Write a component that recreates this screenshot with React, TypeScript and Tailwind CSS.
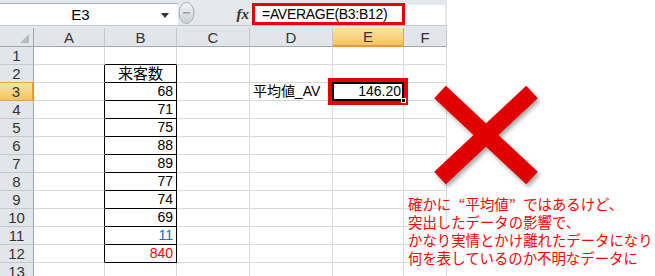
import React from "react";

const COLS = ["A", "B", "C", "D", "E", "F"];
const BVALS: Record<number, { t: string; c: string }> = {
  3: { t: "68", c: "text-black" },
  4: { t: "71", c: "text-black" },
  5: { t: "75", c: "text-black" },
  6: { t: "88", c: "text-black" },
  7: { t: "89", c: "text-black" },
  8: { t: "77", c: "text-black" },
  9: { t: "74", c: "text-black" },
  10: { t: "69", c: "text-black" },
  11: { t: "11", c: "text-[#0070c0]" },
  12: { t: "840", c: "text-[#ff0000]" },
};

function Cell({ r, c }: { r: number; c: string }) {
  const isBox = c === "B" && r >= 2 && r <= 12;
  const blackRight = isBox || (c === "A" && r >= 2 && r <= 12);
  const blackBottom = isBox || (c === "B" && r === 1);
  const rightCls = blackRight ? "border-r-black" : "border-r-[#d9d9d9]";
  const bottomCls = blackBottom ? "border-b-black" : "border-b-[#d9d9d9]";
  let content: React.ReactNode = null;
  if (c === "B" && r === 2) {
    content = <div className="w-full text-center text-[15px] leading-[17px] text-black">来客数</div>;
  } else if (c === "B" && BVALS[r]) {
    content = (
      <div className={`w-full text-right pr-[3px] text-[14px] leading-[17px] ${BVALS[r].c}`}>{BVALS[r].t}</div>
    );
  } else if (c === "D" && r === 3) {
    content = <div className="pl-[3px] text-[14px] leading-[17px] text-black whitespace-nowrap">平均値_AV</div>;
  } else if (c === "E" && r === 3) {
    content = (
      <div className="absolute left-[-5px] top-[-5px] w-[80px] h-[27px] border-[4px] border-[#e60000] z-10">
        <div className="w-full h-full border-[2px] border-black bg-white flex items-center justify-end pr-[1px]">
          <span className="text-[14px] leading-[15px] text-black">146.20</span>
        </div>
        <div className="absolute right-[-2px] bottom-[-2px] w-[5px] h-[5px] bg-black border border-white" />
      </div>
    );
  }
  return (
    <div className={`relative border-r border-b ${rightCls} ${bottomCls} flex items-end overflow-visible`}>
      {content}
    </div>
  );
}

export default function App() {
  const rows = Array.from({ length: 13 }, (_, i) => i + 1);
  return (
    <div className="relative w-[655px] h-[276px] bg-white overflow-hidden font-['Liberation_Sans','Noto_Sans_CJK_JP',sans-serif]">
      <div className="w-[447px]">
        {/* formula bar */}
        <div className="flex flex-col h-[28px] bg-[#e4e7eb]">
          <div className="flex h-[25px]">
            <div className="mt-[3px] w-[178px] h-[22px] border-t border-t-[#aab1ba] pt-[1px] bg-white flex items-center">
              <div className="w-[161px] text-center text-[15px] leading-[18px] text-black">E3</div>
              <svg width="8" height="6" viewBox="0 0 8 6" className="mt-[1px]">
                <path d="M0 0 L8 0 L4 5 Z" fill="#333" />
              </svg>
            </div>
            <div className="w-[15px] h-[25px] relative">
              <svg width="17" height="25" viewBox="0 0 17 25" className="absolute left-0 top-0">
                <defs>
                  <linearGradient id="gb" x1="0" y1="0" x2="0" y2="1">
                    <stop offset="0" stopColor="#f4f5f7" />
                    <stop offset="1" stopColor="#c9ced5" />
                  </linearGradient>
                </defs>
                <ellipse cx="8.5" cy="13" rx="7.5" ry="10.5" fill="url(#gb)" stroke="#a9b0b9" />
                <rect x="5" y="12" width="7" height="1.6" fill="#9aa1aa" />
              </svg>
            </div>
            <div className="w-[59px] flex items-center justify-end pr-[3px]">
              <span className="font-['Liberation_Serif',serif] italic font-bold text-[15px] leading-[18px] text-[#333] mt-[3px]">fx</span>
            </div>
            <div className="mt-[3px] w-[153px] h-[22px] border-[3px] border-[#e60000] bg-white flex items-center pl-[7px]">
              <span className="text-[14px] leading-[16px] text-black whitespace-nowrap tracking-[-0.3px]">=AVERAGE(B3:B12)</span>
            </div>
            <div className="mt-[5px] w-[40px] h-[20px] bg-white" />
          </div>
          <div className="h-px bg-[#c3c8ce]" />
          <div className="h-[2px] bg-[#e4e7eb]" />
        </div>
        {/* grid */}
        <div className="grid grid-cols-[34px_71px_72px_73px_83px_71px_43px] grid-rows-[19px] auto-rows-[18px]">
          <div className="relative bg-[#e2e6eb] border-r border-b border-r-[#9ea6b0] border-b-[#9ea6b0]">
            <svg width="9" height="9" viewBox="0 0 9 9" className="absolute right-[4px] bottom-[3px]">
              <path d="M9 0 L9 9 L0 9 Z" fill="#b6bcc4" />
            </svg>
          </div>
          {COLS.map((c) =>
            c === "E" ? (
              <div
                key={c}
                className="bg-gradient-to-b from-[#fbe3a3] to-[#f4c55f] border-r border-b-2 border-r-[#e2a64a] border-b-[#f29436] flex items-center justify-center text-[15px] leading-[17px] text-[#333]"
              >
                {c}
              </div>
            ) : (
              <div
                key={c}
                className="bg-[#e2e6eb] border-r border-b border-r-[#c3c8ce] border-b-[#9ea6b0] flex items-center justify-center text-[15px] leading-[17px] text-[#333]"
              >
                {c}
              </div>
            )
          )}
          {rows.map((r) => (
            <React.Fragment key={r}>
              {r === 3 ? (
                <div className="bg-gradient-to-b from-[#fbe3a3] to-[#f4c55f] border-r-2 border-b border-t border-r-[#f29436] border-b-[#e2a64a] border-t-[#e2a64a] -mt-px flex items-center justify-center text-[15px] leading-[17px] text-[#333]">
                  {r}
                </div>
              ) : (
                <div className="bg-[#e2e6eb] border-r border-b border-r-[#9ea6b0] border-b-[#c3c8ce] flex items-center justify-center text-[15px] leading-[17px] text-[#333]">
                  {r}
                </div>
              )}
              {COLS.map((c) => (
                <Cell key={c} r={r} c={c} />
              ))}
            </React.Fragment>
          ))}
        </div>
      </div>

      {/* annotation: red X */}
      <svg
        width="140"
        height="130"
        viewBox="0 0 140 130"
        className="absolute left-[416px] top-[70px] drop-shadow-[2px_3px_2px_rgba(0,0,0,0.35)]"
      >
        <line x1="24" y1="22" x2="116" y2="108" stroke="#e00000" strokeWidth="17" />
        <line x1="116" y1="22" x2="24" y2="108" stroke="#e00000" strokeWidth="17" />
      </svg>

      {/* annotation text */}
      <div
        lang="ja"
        className="absolute left-[408px] top-[195px] text-[14.4px] leading-[18px] text-[#ff0000] font-['Noto_Sans_CJK_JP',sans-serif] whitespace-nowrap"
      >
        <div>
          確かに<span className="inline-block w-[14.4px] text-right">“</span>平均値
          <span className="inline-block w-[14.4px] text-left">”</span>ではあるけど、
        </div>
        <div>突出したデータの影響で、</div>
        <div>かなり実情とかけ離れたデータになり</div>
        <div>何を表しているのか不明なデータに</div>
      </div>
    </div>
  );
}
